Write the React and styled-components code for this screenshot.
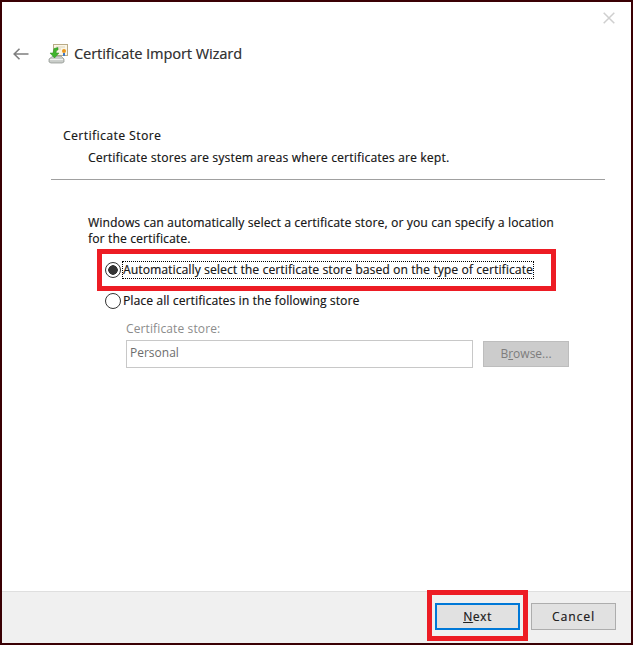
import React from 'react'
import styled, { createGlobalStyle } from 'styled-components'

const Global = createGlobalStyle`
html, body { margin: 0; padding: 0; background: #fff; }
`

function BackArrow() {
  return (
    <svg width="16" height="12" viewBox="0 0 16 12">
      <path d="M1 6H15.5M6.5 .8L1.2 6L6.5 11.2" fill="none" stroke="#7f7f7f" strokeWidth="1.6" />
    </svg>
  )
}

function CloseX() {
  return (
    <svg width="12" height="12" viewBox="0 0 12 12">
      <path d="M.7 .7L11.3 11.3M11.3 .7L.7 11.3" fill="none" stroke="#cfcfcf" strokeWidth="1.5" />
    </svg>
  )
}

function WizardIcon() {
  return (
    <svg width="20" height="20" viewBox="0 0 20 20">
      <rect x="5.5" y="0.5" width="14" height="11" fill="#fbf6e6" stroke="#b9ab86" />
      <path d="M8 3H17M8 5H13" stroke="#d9d2bc" />
      <circle cx="16" cy="7" r="2" fill="#e9961d" />
      <path d="M15 9H17V12H15Z" fill="#3f79c9" />
      <path d="M1 15L5 12H13L16 15V18L14 19H3L1 18Z" fill="#c9cdc9" stroke="#8b908b" strokeWidth=".7" />
      <path d="M2 15.6H15" stroke="#f4f4f4" />
      <path d="M10 3.5L6 4.5L5 9H2L6.5 14L11 9H8L8.5 6.5L10 6Z" fill="#3fb52c" stroke="#2c8a20" strokeWidth=".5" />
    </svg>
  )
}

function App() {
  return (
    <Win>
      <Global />
      <CloseBtn><CloseX /></CloseBtn>
      <Header>
        <BackArrow />
        <IconSlot><WizardIcon /></IconSlot>
        <Title>Certificate Import Wizard</Title>
      </Header>

      <Intro>
        <Heading>Certificate Store</Heading>
        <SubHeading>Certificate stores are system areas where certificates are kept.</SubHeading>
      </Intro>
      <Rule />

      <Content>
        <Para>
          Windows can automatically select a certificate store, or you can specify a location
          <br />
          for the certificate.
        </Para>
        <Options>
          <Option>
            <Radio $checked />
            <Focused>Automatically select the certificate store based on the type of certificate</Focused>
            <Highlight />
          </Option>
          <Option>
            <Radio />
            <Label>Place all certificates in the following store</Label>
          </Option>
        </Options>
        <StoreBlock>
          <StoreLabel>Certificate store:</StoreLabel>
          <StoreRow>
            <StoreInput>Personal</StoreInput>
            <BrowseBtn>B<u>r</u>owse...</BrowseBtn>
          </StoreRow>
        </StoreBlock>
      </Content>

      <Footer>
        <NextWrap>
          <Button $primary><u>N</u>ext</Button>
          <Highlight $footer />
        </NextWrap>
        <Button $wide>Cancel</Button>
      </Footer>
    </Win>
  )
}

export default App

const font = `"Open Sans", "Liberation Sans", sans-serif`
const heavy = `text-shadow: .4px 0 0 rgba(0, 0, 0, .45);`

const Win = styled.div`
position: relative;
box-sizing: border-box;
width: 633px;
height: 645px;
border: 2px solid #3a0004;
background: #fff;
display: flex;
flex-direction: column;
font-family: ${font};
font-size: 12px;
color: #1a1a1a;
overflow: hidden;
`

const CloseBtn = styled.div`
position: absolute;
top: 10px;
right: 16px;
line-height: 0;
`

const Header = styled.div`
display: flex;
align-items: center;
padding: 42px 0 0 11px;
height: 20px;
`

const IconSlot = styled.div`
margin-left: 19px;
line-height: 0;
`

const Title = styled.div`
margin: 0 0 2px 6px;
font-size: 14.4px;
color: #333;
${heavy}
`

const Intro = styled.div`
margin: 64px 0 0 61px;
`

const Heading = styled.div`
line-height: 16px;
letter-spacing: .5px;
${heavy}
`

const SubHeading = styled.div`
margin: 6px 0 0 25px;
line-height: 16px;
letter-spacing: .22px;
${heavy}
`

const Rule = styled.div`
margin: 13px 26px 0 49px;
height: 1px;
background: #a0a0a0;
`

const Content = styled.div`
flex: 1;
padding: 35px 0 0 86px;
`

const Para = styled.div`
line-height: 16px;
letter-spacing: .17px;
${heavy}
`

const Options = styled.div`
margin-top: 15px;
margin-left: 17px;
display: flex;
flex-direction: column;
gap: 15px;
`

const Option = styled.div`
position: relative;
display: flex;
align-items: center;
height: 16px;
`

const Radio = styled.span`
box-sizing: border-box;
width: 16px;
height: 16px;
margin-right: 2px;
border-radius: 50%;
border: 1px solid #333;
background: ${p => p.$checked ? 'radial-gradient(circle, #333 0 4.5px, #fff 5px)' : '#fff'};
flex: none;
`

const Label = styled.span`
line-height: 16px;
letter-spacing: .14px;
${heavy}
`

const Focused = styled(Label)`
outline: 1px dotted #000;
`

const Highlight = styled.div`
position: absolute;
box-sizing: border-box;
border: 5px solid #ed1c24;
pointer-events: none;
${p => p.$footer
    ? 'left: -8px; right: -8px; top: -13px; bottom: -11px;'
    : 'left: -8px; top: -13px; width: 459px; height: 42px;'}
`

const StoreBlock = styled.div`
margin: 12px 0 0 38px;
`

const StoreLabel = styled.div`
color: #8c8c8c;
line-height: 16px;
letter-spacing: .12px;
`

const StoreRow = styled.div`
margin-top: 3px;
display: flex;
align-items: center;
gap: 10px;
`

const StoreInput = styled.div`
box-sizing: border-box;
width: 347px;
height: 28px;
border: 1px solid #c8c8c8;
padding: 0 3px;
line-height: 24px;
color: #6d6d6d;
`

const BrowseBtn = styled.div`
box-sizing: border-box;
width: 86px;
height: 26px;
border: 1px solid #bdbdbd;
background: #cccccc;
color: #7d7d7d;
text-align: center;
line-height: 23px;
`

const Footer = styled.div`
height: 52px;
box-sizing: border-box;
border-top: 1px solid #dfdfdf;
background: #f0f0f0;
display: flex;
justify-content: flex-end;
gap: 11px;
padding: 11px 15px 0 0;
`

const NextWrap = styled.div`
position: relative;
height: 27px;
`

const Button = styled.div`
box-sizing: border-box;
width: 85px;
height: 27px;
border: ${p => p.$primary ? '2px solid #0078d7' : '1px solid #adadad'};
background: #e1e1e1;
text-align: center;
line-height: ${p => p.$primary ? '24px' : '26px'};
letter-spacing: ${p => p.$wide ? '1px' : '.6px'};
color: #222;
${heavy}
`
